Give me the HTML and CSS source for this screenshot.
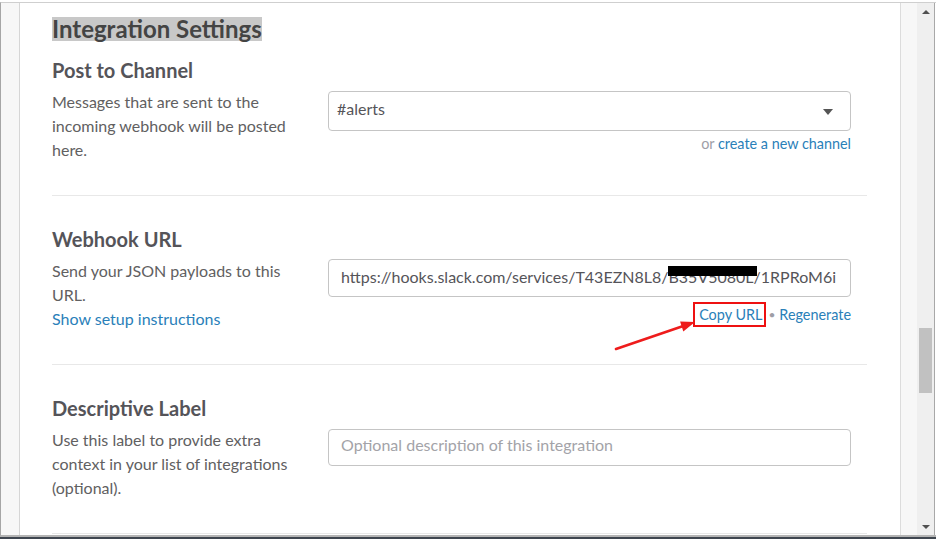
FILE: index.html
```html
<!DOCTYPE html>
<html lang="en">
<head>
<meta charset="utf-8">
<title>Integration Settings</title>
<link rel="stylesheet" href="styles.css">
</head>
<body>
<div class="window">
  <div class="gutter"></div>
  <main class="content">
    <div class="inner">
      <h2 class="page-title"><span class="sel">Integration Settings</span></h2>

      <section class="setting first">
        <h3 class="setting-title">Post to Channel</h3>
        <div class="setting-row">
          <p class="desc">Messages that are sent to the incoming webhook will be posted here.</p>
          <div class="control">
            <div class="select">
              <span class="select-value">#alerts</span>
              <span class="caret"></span>
            </div>
            <div class="help-line"><span class="muted">or</span> <a class="link" href="#">create a new channel</a></div>
          </div>
        </div>
      </section>

      <section class="setting">
        <h3 class="setting-title">Webhook URL</h3>
        <div class="setting-row">
          <div class="desc">
            <p class="desc-text">Send your JSON payloads to this URL.</p>
            <a class="link big" href="#">Show setup instructions</a>
          </div>
          <div class="control">
            <div class="input url">https://hooks.slack.com/services/T43EZN8L8/<span class="redacted">B35V5080L</span>/1RPRoM6i</div>
            <div class="help-line actions"><a class="link boxed" href="#">Copy URL</a><span class="dot">•</span><a class="link" href="#">Regenerate</a></div>
          </div>
        </div>
      </section>

      <section class="setting">
        <h3 class="setting-title">Descriptive Label</h3>
        <div class="setting-row">
          <p class="desc">Use this label to provide extra context in your list of integrations (optional).</p>
          <div class="control">
            <div class="input placeholder">Optional description of this integration</div>
          </div>
        </div>
      </section>
    </div>

    <svg class="annot-arrow" width="90" height="40" viewBox="0 0 90 40">
      <line x1="6" y1="34" x2="74" y2="10.8" stroke="#ee1c1c" stroke-width="2.6" stroke-linecap="round"/>
      <polygon points="85,7 73.3,16.4 70.1,6.5" fill="#ee1c1c"/>
    </svg>
  </main>
  <div class="rail"></div>
  <div class="scrollbar">
    <div class="sb-btn"><span class="sb-up"></span></div>
    <div class="sb-track"><div class="sb-thumb"></div></div>
    <div class="sb-btn"><span class="sb-down"></span></div>
  </div>
  <div class="edge"></div>
</div>
<div class="taskbar"></div>
</body>
</html>
```
FILE: styles.css
```css
* { box-sizing: border-box; }
html, body { margin: 0; padding: 0; }
body {
  width: 936px;
  height: 539px;
  overflow: hidden;
  background: #fff;
  font-family: Lato, "Noto Sans", "Liberation Sans", sans-serif;
}
.window {
  margin-top: 2px;
  height: 535px;
  display: flex;
  border-top: 1px solid #cfcfcf;
  border-bottom: 2px solid #b4b4b4;
  border-left: 1px solid #a6a6a6;
}
.taskbar { height: 2px; background: #3f4650; }
.gutter {
  width: 19px;
  flex: none;
  background: #f7f7f7;
  border-right: 1px solid #d6d6d6;
}
.content {
  width: 880px;
  flex: none;
  position: relative;
  overflow: hidden;
  background: #fff;
}
.inner { padding: 14px 33px 0 32px; }
.page-title {
  margin: 0;
  font-size: 24px;
  line-height: 24px;
  height: 24px;
  font-weight: 700;
  color: #444;
}
.sel {
  display: inline-block;
  height: 24px;
  line-height: 24px;
  background: #c8c8c8;
}
.setting {
  padding: 30px 0 33px;
  border-bottom: 1px solid #e8e8e8;
}
.setting.first { padding-top: 16px; }
.setting-title {
  margin: 0 0 7px;
  font-size: 20px;
  line-height: 26px;
  font-weight: 700;
  color: #555459;
}
.setting-row {
  display: grid;
  grid-template-columns: 248px 523px;
  column-gap: 28px;
}
.desc, .desc-text {
  margin: 0;
  font-size: 16px;
  line-height: 24px;
  color: #616061;
}
.link { color: #2a80b9; text-decoration: none; }
.link.big { font-size: 16px; line-height: 24px; display: block; }
.control { padding-top: 1px; }
.select {
  height: 40px;
  border: 1px solid #c5c5c5;
  border-radius: 4px;
  display: flex;
  align-items: center;
  justify-content: space-between;
  padding: 0 17px 6px 8px;
  font-size: 16px;
  color: #555459;
}
.caret {
  width: 0; height: 0;
  border-left: 5px solid transparent;
  border-right: 5px solid transparent;
  border-top: 6px solid #555;
  margin-top: 7px;
}
.help-line {
  margin-top: 4px;
  text-align: right;
  font-size: 14.4px;
  line-height: 18px;
}
.muted { color: #9e9ea6; }
.input {
  height: 38px;
  border: 1px solid #c5c5c5;
  border-radius: 4px;
  padding: 0 12px;
  font-size: 16px;
  line-height: 34px;
  color: #555459;
  white-space: nowrap;
  overflow: hidden;
}
.input.url { margin-top: -1px; }
.input.placeholder { color: #a3a3a8; height: 37px; line-height: 30px; }
.redacted { position: relative; }
.redacted::after {
  content: "";
  position: absolute;
  left: -1px;
  top: -1px;
  width: 89px;
  height: 10px;
  background: #000;
}
.actions {
  margin-top: 5px;
  display: flex;
  justify-content: flex-end;
  align-items: center;
  line-height: 21px;
}
.boxed {
  border: 2px solid #ee1111;
  padding: 0 2px 0 4px;
}
.dot { color: #9e9ea6; font-size: 12px; padding: 0 4px 0 2px; }
.annot-arrow {
  position: absolute;
  left: 590px;
  top: 312px;
}
.rail {
  width: 17px;
  flex: none;
  background: #f7f7f7;
  border-left: 1px solid #dcdcdc;
}
.scrollbar {
  width: 17px;
  flex: none;
  background: #efefef;
  display: flex;
  flex-direction: column;
}
.sb-btn {
  height: 17px;
  display: flex;
  align-items: center;
  justify-content: center;
}
.sb-up {
  width: 0; height: 0;
  border-left: 4px solid transparent;
  border-right: 4px solid transparent;
  border-bottom: 4px solid #505050;
}
.sb-down {
  width: 0; height: 0;
  border-left: 4px solid transparent;
  border-right: 4px solid transparent;
  border-top: 4px solid #505050;
}
.sb-track { flex: 1; padding: 0 2px; }
.sb-thumb {
  margin-top: 308px;
  height: 65px;
  background: #c1c1c1;
}
.edge {
  width: 2px;
  flex: none;
  border-left: 1px solid #a8a8a8;
  background: #fff;
}
```
